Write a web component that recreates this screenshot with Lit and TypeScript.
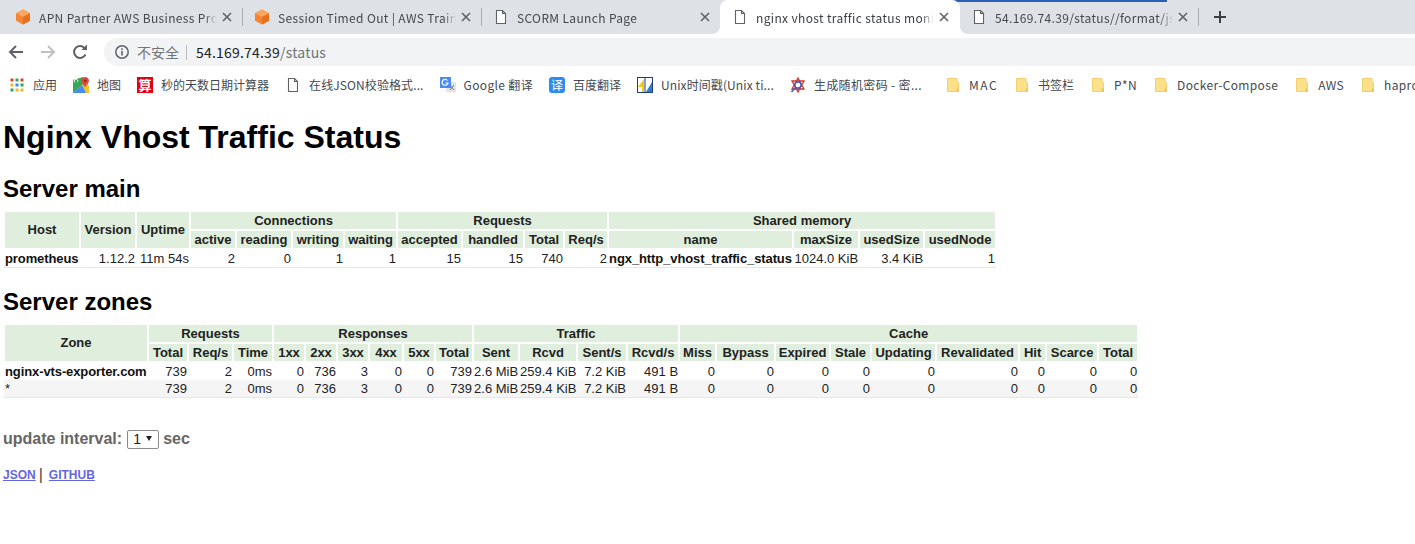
import { LitElement, html, css, svg } from "lit";
import { customElement } from "lit/decorators.js";

const xIcon = svg`<path d="M1 1L9 9M9 1L1 9" stroke="#5f6368" stroke-width="1.6" fill="none"/>`;
const boxIcon = html`<svg width="16" height="16" viewBox="0 0 16 16"><path d="M8 0.5L15 4.3V11.7L8 15.5L1 11.7V4.3Z" fill="#f58536"/><path d="M8 0.5L15 4.3L8 8L1 4.3Z" fill="#f9a65e"/><path d="M8 8L15 4.3V11.7L8 15.5Z" fill="#e8721c"/></svg>`;
const docIcon = html`<svg width="16" height="16" viewBox="0 0 16 16"><path d="M3.5 1.5H9.5L12.5 4.5V14.5H3.5Z M9.5 1.5V4.5H12.5" fill="#fff" stroke="#5f6368" stroke-width="1.1"/></svg>`;
const folderIcon = html`<svg width="16" height="16" viewBox="0 0 16 16"><path d="M2.500 1.500H12V5L13.500 5.500V14.500H2.500Z" fill="#fde08a" stroke="#f0cf74" stroke-width="1"/><rect x="11.500" y="11.500" width="2.500" height="3" fill="#f3c457"/></svg>`;
const appsIcon = html`<svg width="16" height="16" viewBox="0 0 16 16">${[
  ["#d9433a", "#33a853", "#d9433a"],
  ["#f2b632", "#4285f4", "#33a853"],
  ["#33a853", "#f2b632", "#f2b632"],
].map((r, y) => r.map((c, x) => svg`<rect x=${1.5 + x * 5} y=${1.5 + y * 5} width="3" height="3" fill=${c}/>`))}</svg>`;
const mapsIcon = html`<svg width="16" height="16" viewBox="0 0 16 16"><path d="M0 3L10 0V16L0 16Z" fill="#35a853"/><path d="M0 16L12 5L16 9V16Z" fill="#f2c230"/><path d="M0 16L9 8L13 16Z" fill="#4a8af4"/><path d="M12 0C14.400 0 16 1.700 16 3.800C16 6 13.500 8 12 10C10.500 8 8.500 6 8.500 3.800C8.500 1.700 10 0 12 0Z" fill="#dd4b3e"/><circle cx="12.200" cy="3.800" r="1.300" fill="#8e2a20"/><path d="M2 5.500A1.800 1.800 0 1 1 4.500 5" stroke="#fff" fill="none"/></svg>`;
const gIcon = html`<svg width="16" height="16" viewBox="0 0 16 16"><rect x="6" y="5" width="10" height="10" fill="#e3e5e8"/><rect width="11" height="11" fill="#4b8bf5"/><path d="M7.500 3.500A3 3 0 1 0 8 6H5.500" stroke="#fff" stroke-width="1.200" fill="none"/><path d="M10 8L14 13M14 8L10 13" stroke="#777" stroke-width="1"/></svg>`;
const unixIcon = html`<svg width="16" height="16" viewBox="0 0 16 16"><rect x=".5" y=".5" width="15" height="15" fill="#fff" stroke="#1c3d78"/><path d="M1 10L7 2V15H5V10Z" fill="#f4c91e"/><path d="M9 15L15 5V15Z" fill="#2d7fc1"/><rect x="7.500" y="1" width="1" height="14" fill="#1c3d78"/></svg>`;
const genIcon = html`<svg width="16" height="16" viewBox="0 0 16 16"><path d="M8 1L14 12H2Z M8 15L2 4H14Z" fill="none" stroke="#c8372d" stroke-width="1.300"/><circle cx="8" cy="8" r="3" fill="#fff" stroke="#3a5fc0" stroke-width="1.300"/><path d="M5.500 10.500L1.500 15" stroke="#3a5fc0" stroke-width="1.500"/></svg>`;

const tabs = [
  { icon: boxIcon, title: "APN Partner AWS Business Pro", sep: true },
  { icon: boxIcon, title: "Session Timed Out | AWS Train", sep: true },
  { icon: docIcon, title: "SCORM Launch Page" },
  { icon: docIcon, title: "nginx vhost traffic status moni", active: true },
  { icon: docIcon, title: "54.169.74.39/status//format/js", sep: true },
];

const marks = [
  { icon: appsIcon, label: "应用" },
  { icon: mapsIcon, label: "地图" },
  { icon: html`<span class="suan">算</span>`, label: "秒的天数日期计算器" },
  { icon: docIcon, label: "在线JSON校验格式...", cls: "mid" },
  { icon: gIcon, label: "Google 翻译", cls: "wide" },
  { icon: html`<span class="yi">译</span>`, label: "百度翻译" },
  { icon: unixIcon, label: "Unix时间戳(Unix ti...", cls: "mid" },
  { icon: genIcon, label: "生成随机密码 - 密...", cls: "wide endsites" },
  { icon: folderIcon, label: "MAC", cls: "mac" },
  { icon: folderIcon, label: "书签栏" },
  { icon: folderIcon, label: "P*N", cls: "wide" },
  { icon: folderIcon, label: "Docker-Compose", cls: "wide" },
  { icon: folderIcon, label: "AWS", cls: "wide" },
  { icon: folderIcon, label: "hapro", cls: "wide" },
];

const mainCols = [76, 56, 54, 46, 56, 52, 53, 65, 62, 40, 44, 185, 66, 65, 72];
const zoneCols = [144, 40, 45, 40, 32, 32, 32, 34, 32, 38, 46, 58, 50, 52, 37, 59, 55, 41, 65, 83, 27, 52, 40];
const mainSub = ["active", "reading", "writing", "waiting", "accepted", "handled", "Total", "Req/s", "name", "maxSize", "usedSize", "usedNode"];
const mainRow = ["1.12.2", "11m 54s", "2", "0", "1", "1", "15", "15", "740", "2", "ngx_http_vhost_traffic_status", "1024.0 KiB", "3.4 KiB", "1"];
const zoneSub = ["Total", "Req/s", "Time", "1xx", "2xx", "3xx", "4xx", "5xx", "Total", "Sent", "Rcvd", "Sent/s", "Rcvd/s", "Miss", "Bypass", "Expired", "Stale", "Updating", "Revalidated", "Hit", "Scarce", "Total"];
const zoneVals = ["739", "2", "0ms", "0", "736", "3", "0", "0", "739", "2.6 MiB", "259.4 KiB", "7.2 KiB", "491 B", "0", "0", "0", "0", "0", "0", "0", "0", "0"];

const colgroup = (cols: number[]) => html`<colgroup>${cols.map((w) => html`<col style="width:${w}px" />`)}</colgroup>`;
const total = (cols: number[]) => cols.reduce((a, b) => a + b, 0);

@customElement("app-root")
export class AppRoot extends LitElement {
  static styles = css`
    :host { display: block; width: 1415px; height: 544px; overflow: hidden; background: #fff; position: relative; }
    .chrome { font-family: "Noto Sans CJK SC", "Noto Sans", sans-serif; }
    .strip { height: 34px; background: #dee1e6; display: flex; align-items: stretch; position: relative; }
    .strip .line { position: absolute; left: 779px; top: 0; width: 388px; height: 2px; background: #2b5fb3; }
    .tab { width: 239px; height: 34px; box-sizing: border-box; display: flex; align-items: center; padding: 0 7px 0 15px; gap: 8px; color: #45494f; font-size: 12px; letter-spacing: 0.35px; position: relative; flex: none; }
    .tab.sep::after { content: ""; position: absolute; right: -4px; top: 8px; height: 18px; width: 1px; background: #a9acb1; }
    .tab.active { height: 38px; color: #3c4043; padding-bottom: 4px; z-index: 1; }
    .fill { position: absolute; left: 3px; right: -4px; top: 0; bottom: 0; background: #fff; border-radius: 8px 8px 0 0; z-index: -1; }
    .corner { position: absolute; top: 26px; width: 8px; height: 8px; }
    .corner.a { left: -5px; background: radial-gradient(circle at 0 0, #dee1e6 7.5px, #fff 8.5px); }
    .corner.b { right: -12px; background: radial-gradient(circle at 100% 0, #dee1e6 7.5px, #fff 8.5px); }
    .tab .t { flex: none; width: 190px; margin-right: -15px; white-space: nowrap; -webkit-mask-image: linear-gradient(90deg, #000 165px, transparent 178px); mask-image: linear-gradient(90deg, #000 165px, transparent 178px); }
    .tab svg { flex: none; }
    .plus { margin: 0 0 0 18px; width: 14px; align-self: center; display: flex; }
    .bar { height: 34px; box-sizing: border-box; padding: 4px 0 2px 8px; background: #fff; display: flex; align-items: center; gap: 16px; }
    .bar .nav { display: flex; width: 16px; justify-content: center; }
    .omni { flex: 1; height: 28px; padding: 0 0 0 10px; background: #f1f3f4; border-radius: 14px 0 0 14px; display: flex; align-items: center; gap: 7px; font-size: 14px; color: #70757a; white-space: nowrap; }
    .omni .div { width: 1px; height: 15px; background: #b9bcc0; margin: 0 2px 0 0; }
    .omni .url { letter-spacing: 0.2px; }
    .omni b { font-weight: 400; color: #202124; }
    .marks { height: 33px; display: flex; align-items: center; gap: 16px; padding: 0 0 0 9px; font-size: 12px; color: #45494f; white-space: nowrap; overflow: hidden; box-sizing: border-box; }
    .mark { display: flex; align-items: center; gap: 8px; flex: none; }
    .mark.wide span:last-child { letter-spacing: 0.35px; }
    .mark.mid span:last-child { letter-spacing: 0.1px; }
    .mark.mac span:last-child { letter-spacing: 1.5px; }
    .mark.endsites { margin-right: 7px; }
    .mark svg, .suan, .yi { flex: none; }
    .suan { width: 16px; height: 16px; background: #e60012; color: #fff; font-size: 13px; line-height: 16px; text-align: center; font-weight: 700; }
    .yi { width: 16px; height: 16px; background: #2c8cf0; border-radius: 3px; color: #fff; font-size: 12px; line-height: 16px; text-align: center; }

    .page { padding: 0 0 0 3px; font-family: "Liberation Sans", Arial, sans-serif; color: #000; }
    h1 { font-size: 32px; line-height: 36px; margin: 18px 0 0; font-weight: 700; }
    h2 { font-size: 24px; line-height: 28px; margin: 20px 0 7px; font-weight: 700; }
    table { border-collapse: collapse; table-layout: fixed; font-size: 13px; margin: 0; color: #222; }
    th { background: #dfeedd; border: 2px solid #fff; padding: 0; font-weight: 700; line-height: 17px; color: #222; white-space: nowrap; }
    th[rowspan] { padding-bottom: 2px; }
    td { text-align: right; padding: 0 1px; line-height: 17px; border-bottom: 1px solid #e6e6e6; white-space: nowrap; }
    tbody tr:nth-child(2) td { background: #f5f5f5; }
    td.l { text-align: left; font-weight: 700; color: #111; letter-spacing: -0.1px; }
    td.n { text-align: left; font-weight: 400; }
    tr.top td { border-bottom: 0; }
    .upd { margin: 31px 0 0; font-size: 16px; line-height: 20px; font-weight: 700; color: #666; display: flex; align-items: center; gap: 5px; }
    .sel { position: relative; display: flex; margin-right: -1px; }
    select { appearance: none; -webkit-appearance: none; font: 14px "Liberation Sans", Arial, sans-serif; width: 32px; height: 19px; padding: 0 0 0 5px; color: #222; background: #fff; border: 1px solid #8a8a8a; border-radius: 2px; margin: 0; }
    .arrow { position: absolute; right: 7px; top: 6px; width: 0; height: 0; border-left: 3px solid transparent; border-right: 3px solid transparent; border-top: 5px solid #222; pointer-events: none; }
    .links { margin: 16px 0 0; font-size: 12px; line-height: 20px; font-weight: 700; color: #555; display: flex; align-items: center; }
    .links a { color: #6666dd; }
    .links a + span { font-size: 16px; font-weight: 400; color: #444; margin: 0 6px 0 3px; }
  `;

  render() {
    return html`
      <div class="chrome">
        <div class="strip">
          ${tabs.map((t) => html`<div class="tab ${t.active ? "active" : ""} ${t.sep ? "sep" : ""}">
            ${t.active ? html`<i class="fill"></i><i class="corner a"></i><i class="corner b"></i>` : ""}
            ${t.icon}<span class="t">${t.title}</span>
            <svg width="10" height="10" viewBox="0 0 10 10">${xIcon}</svg>
          </div>`)}
          <div class="plus"><svg width="14" height="14" viewBox="0 0 14 14"><path d="M7 1V13M1 7H13" stroke="#3c4043" stroke-width="2"/></svg></div>
          <div class="line"></div>
        </div>
        <div class="bar">
          <div class="nav"><svg width="16" height="16" viewBox="0 0 16 16"><path d="M15 8H2M8 2L2 8L8 14" fill="none" stroke="#5f6368" stroke-width="2"/></svg></div>
          <div class="nav"><svg width="16" height="16" viewBox="0 0 16 16"><path d="M1 8H14M8 2L14 8L8 14" fill="none" stroke="#bdc1c6" stroke-width="2"/></svg></div>
          <div class="nav"><svg width="16" height="16" viewBox="0 0 16 16"><path d="M13.500 10.500A6 6 0 1 1 13 4.500" fill="none" stroke="#5f6368" stroke-width="2"/><path d="M9.500 6H15V0.500Z" fill="#5f6368"/></svg></div>
          <div class="omni">
            <svg width="16" height="16" viewBox="0 0 16 16"><circle cx="8" cy="8" r="6.200" fill="none" stroke="#5f6368" stroke-width="1.500"/><rect x="7.200" y="7" width="1.600" height="4.500" fill="#5f6368"/><rect x="7.200" y="4.300" width="1.600" height="1.600" fill="#5f6368"/></svg>
            <span>不安全</span><span class="div"></span><span class="url"><b>54.169.74.39</b>/status</span>
          </div>
        </div>
        <div class="marks">
          ${marks.map((m) => html`<div class="mark ${m.cls ?? ""}">${m.icon}<span>${m.label}</span></div>`)}
        </div>
      </div>
      <div class="page">
        <h1>Nginx Vhost Traffic Status</h1>
        <h2>Server main</h2>
        <table style="width:${total(mainCols)}px">
          ${colgroup(mainCols)}
          <thead>
            <tr><th rowspan="2">Host</th><th rowspan="2">Version</th><th rowspan="2">Uptime</th><th colspan="4">Connections</th><th colspan="4">Requests</th><th colspan="4">Shared memory</th></tr>
            <tr>${mainSub.map((s) => html`<th>${s}</th>`)}</tr>
          </thead>
          <tbody><tr><td class="l">prometheus</td>${mainRow.map((v, i) => i === 10 ? html`<td class="l">${v}</td>` : html`<td>${v}</td>`)}</tr></tbody>
        </table>
        <h2>Server zones</h2>
        <table style="width:${total(zoneCols)}px">
          ${colgroup(zoneCols)}
          <thead>
            <tr><th rowspan="2">Zone</th><th colspan="3">Requests</th><th colspan="6">Responses</th><th colspan="4">Traffic</th><th colspan="9">Cache</th></tr>
            <tr>${zoneSub.map((s) => html`<th>${s}</th>`)}</tr>
          </thead>
          <tbody>
            <tr class="top"><td class="l">nginx-vts-exporter.com</td>${zoneVals.map((v) => html`<td>${v}</td>`)}</tr>
            <tr><td class="n">*</td>${zoneVals.map((v) => html`<td>${v}</td>`)}</tr>
          </tbody>
        </table>
        <div class="upd">update interval: <span class="sel"><select><option>1</option><option>2</option><option>5</option></select><i class="arrow"></i></span> sec</div>
        <div class="links"><a href="#">JSON</a><span>|</span><a href="#">GITHUB</a></div>
      </div>
    `;
  }
}
